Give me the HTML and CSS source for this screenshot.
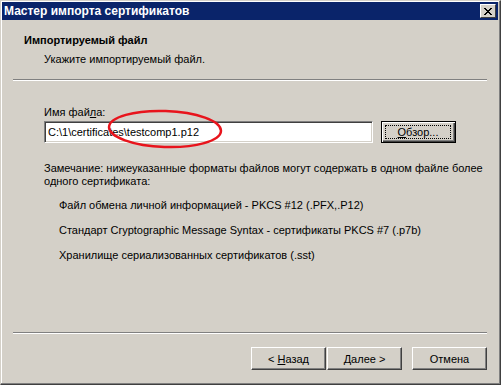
FILE: index.html
```html
<!DOCTYPE html>
<html lang="ru">
<head>
  <meta charset="UTF-8" />
  <title>Мастер импорта сертификатов</title>
  <link rel="stylesheet" href="styles.css">
</head>
<body>
  <div class="window">
    <div class="titlebar">
      <span class="title">Мастер импорта сертификатов</span>
      <div class="close-btn">
        <svg width="8" height="7" viewBox="0 0 8 7">
          <path d="M0 0 L7 7 M1 0 L8 7 M7 0 L0 7 M8 0 L1 7" stroke="#000" stroke-width="1" fill="none" />
        </svg>
      </div>
    </div>

    <!-- Page header -->
    <div class="header">
      <div class="header-title">Импортируемый файл</div>
      <div class="header-sub">Укажите импортируемый файл.</div>
    </div>
    <div class="separator"></div>

    <!-- File choice -->
    <div class="content">
      <div class="label">Имя фай<u>л</u>а:</div>
      <div class="file-row">
        <div class="input">C:\1\certificates\testcomp1.p12</div>
        <button class="btn browse"><span class="focus"><u>О</u>бзор...</span></button>
      </div>

      <p class="note">Замечание: нижеуказанные форматы файлов могут содержать в одном файле более одного сертификата:</p>
      <ul class="formats">
        <li>Файл обмена личной информацией - PKCS #12 (.PFX,.P12)</li>
        <li>Стандарт Cryptographic Message Syntax - сертификаты PKCS #7 (.p7b)</li>
        <li>Хранилище сериализованных сертификатов (.sst)</li>
      </ul>
    </div>

    <div class="separator"></div>
    <div class="buttons">
      <button class="btn">&lt; <u>Н</u>азад</button>
      <button class="btn"><u>Д</u>алее &gt;</button>
      <button class="btn cancel">Отмена</button>
    </div>

    <!-- Annotation drawn over the dialog -->
    <svg class="mark" width="120" height="42" viewBox="0 0 120 42">
      <ellipse cx="59" cy="20" rx="56" ry="18" fill="none" stroke="#e8141c" stroke-width="2.5" transform="rotate(2 59 20)" />
    </svg>
  </div>
</body>
</html>
```

FILE: styles.css
```css
body {
  margin: 0;
  font-family: "Liberation Sans", Arial, sans-serif;
  font-size: 11px;
  color: #000;
  background: #d4d0c8;
}
.window {
  position: relative;
  width: 501px;
  height: 385px;
  box-sizing: border-box;
  background: #d4d0c8;
  border-top: 1px solid #d4d0c8;
  border-left: 1px solid #d4d0c8;
  border-right: 1px solid #404040;
  border-bottom: 1px solid #404040;
  box-shadow: inset -1px -1px 0 #808080, inset 1px 1px 0 #fff;
  display: flex;
  flex-direction: column;
  padding: 1px 2px 2px 1px;
}
.titlebar {
  height: 18px;
  background: #0a246a;
  color: #fff;
  font-weight: bold;
  font-size: 12px;
  display: flex;
  align-items: center;
  justify-content: space-between;
  padding: 0 2px 0 2px;
}
.close-btn {
  width: 16px;
  height: 14px;
  box-sizing: border-box;
  background: #d4d0c8;
  border-top: 1px solid #fff;
  border-left: 1px solid #fff;
  border-right: 1px solid #404040;
  border-bottom: 1px solid #404040;
  display: flex;
  align-items: center;
  justify-content: center;
}
.header {
  padding: 14px 0 0 22px;
  height: 45px;
}
.header-title {
  font-weight: bold;
  line-height: 13px;
}
.header-sub {
  margin-top: 6px;
  padding-left: 20px;
  line-height: 13px;
}
.separator {
  height: 1px;
  margin: 0 11px;
  background: #808080;
  border-bottom: 1px solid #fff;
}
.content {
  flex: 1;
  padding: 25px 0 0 42px;
}
.label {
  line-height: 13px;
}
.file-row {
  display: flex;
  margin-top: 2px;
  gap: 8px;
}
.input {
  width: 329px;
  height: 22px;
  box-sizing: border-box;
  background: #fff;
  border-top: 1px solid #808080;
  border-left: 1px solid #808080;
  border-right: 1px solid #fff;
  border-bottom: 1px solid #fff;
  box-shadow: inset 1px 1px 0 #404040, inset -1px -1px 0 #d4d0c8;
  padding: 4px 0 0 3px;
  line-height: 13px;
}
.btn {
  font-family: inherit;
  font-size: 11px;
  width: 75px;
  height: 23px;
  padding: 0;
  background: #d4d0c8;
  border-top: 1px solid #fff;
  border-left: 1px solid #fff;
  border-right: 1px solid #404040;
  border-bottom: 1px solid #404040;
  box-shadow: inset -1px -1px 0 #808080;
  color: #000;
}
.browse {
  border: 1px solid #000;
  box-shadow: inset 1px 1px 0 #fff, inset -1px -1px 0 #404040, inset -2px -2px 0 #808080;
  height: 22px;
}
.browse .focus {
  display: block;
  margin: 3px 4px 3px 3px;
  border: 1px dotted #000;
  line-height: 12px;
}
.note {
  margin: 19px 0 0 0;
  line-height: 13px;
  width: 440px;
}
.formats {
  list-style: none;
  margin: 11px 0 0 0;
  padding: 0 0 0 15px;
}
.formats li {
  line-height: 13px;
  margin-bottom: 12px;
}
.buttons {
  display: flex;
  justify-content: flex-end;
  padding: 13px 11px 12px 0;
}
.cancel {
  margin-left: 10px;
}
.btn + .btn:not(.cancel) {
  margin-left: 1px;
}
.mark {
  position: absolute;
  left: 105px;
  top: 108px;
}
```
